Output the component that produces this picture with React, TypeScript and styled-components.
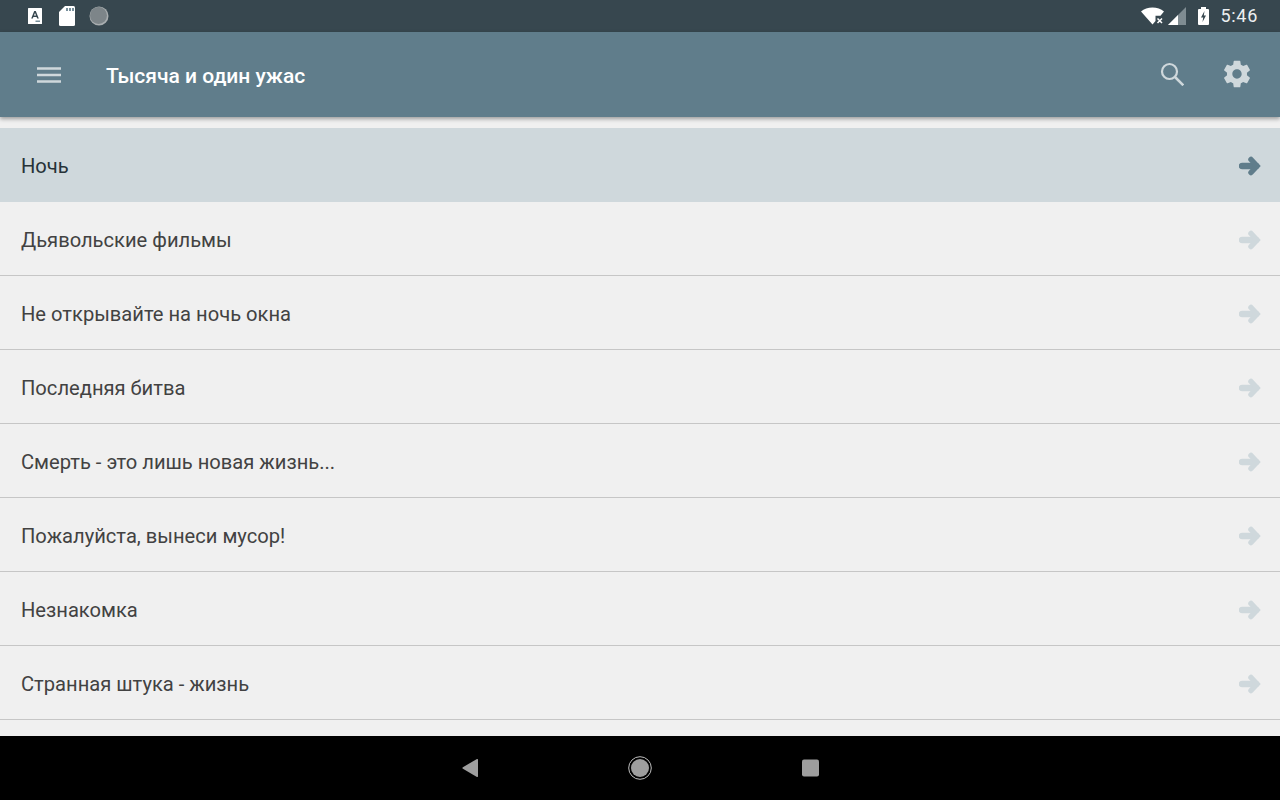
import React from "react";
import styled, { createGlobalStyle } from "styled-components";

const GlobalStyle = createGlobalStyle`
  html, body {
    margin: 0;
    padding: 0;
    width: 1280px;
    height: 800px;
    overflow: hidden;
    background: #f0f0f0;
    font-family: Roboto, "Noto Sans", sans-serif;
  }
`;

const Screen = styled.div`
  display: flex;
  flex-direction: column;
  width: 1280px;
  height: 800px;
  overflow: hidden;
`;

/* ------------------------------- status bar ------------------------------- */
const StatusBar = styled.div`
  display: flex;
  align-items: center;
  justify-content: space-between;
  height: 32px;
  flex: none;
  padding: 0 22px 0 28px;
  background: #37474f;
`;

const StatusGroup = styled.div`
  display: flex;
  align-items: center;
`;

const Clock = styled.span`
  margin-left: 11px;
  color: #eceff1;
  font-size: 18px;
  line-height: 32px;
  letter-spacing: 0.7px;
`;

const SdSvg = styled.svg`
  margin-left: 17px;
`;

const DiscSvg = styled.svg`
  margin-left: 14px;
`;

const SignalSvg = styled.svg`
  margin-left: 3px;
`;

const BatterySvg = styled.svg`
  margin-left: 12px;
`;

/* --------------------------------- app bar -------------------------------- */
const AppBar = styled.header`
  position: relative;
  z-index: 2;
  display: flex;
  align-items: center;
  height: 85px;
  flex: none;
  padding: 0 27px 0 37px;
  background: #607d8b;
  box-shadow: 0 2px 4px rgba(0, 0, 0, 0.35);
`;

const Title = styled.h1`
  flex: 1;
  margin: 0 0 0 45px;
  padding-top: 2px;
  color: #fff;
  font-size: 21px;
  font-weight: 500;
  line-height: 28px;
`;

const Actions = styled.div`
  display: flex;
  align-items: center;
  gap: 37px;
  padding-bottom: 2px;
`;

const BlockSvg = styled.svg`
  display: block;
`;

/* ---------------------------------- list ---------------------------------- */
const List = styled.main`
  flex: 1;
  min-height: 0;
  overflow: hidden;
  padding-top: 11px;
  background: #f0f0f0;
`;

const Row = styled.div<{ $active?: boolean }>`
  display: flex;
  align-items: center;
  justify-content: space-between;
  box-sizing: border-box;
  height: 74px;
  padding: 2px 17px 0 21px;
  background: ${(p) => (p.$active ? "#cfd8dc" : "transparent")};
  border-bottom: 1px solid ${(p) => (p.$active ? "#cfd8dc" : "#c6c6c6")};
  font-size: 20.15px;
`;

const RowText = styled.span<{ $active?: boolean }>`
  color: ${(p) => (p.$active ? "#263238" : "#424242")};
`;

/* ------------------------------- navigation ------------------------------- */
const NavBar = styled.nav`
  display: flex;
  align-items: center;
  justify-content: center;
  gap: 150px;
  height: 64px;
  flex: none;
  padding-left: 2px;
  background: #000;
`;

const ALauncher = () => (
  <svg width="14" height="16" viewBox="0 0 14 16">
    <rect width="14" height="16" rx="0.5" fill="#fff" />
    <path d="M3.2 10.5 6.2 3h1.6l3 7.5H9.2L8.6 9H5.4l-.6 1.5zM5.9 7.6h2.2L7 4.9z" fill="#37474f" />
    <rect x="7.5" y="12.5" width="4.5" height="1.5" fill="#78909c" />
  </svg>
);

const SdCard = () => (
  <SdSvg width="16" height="20" viewBox="0 0 16 20">
    <path d="M6 0h8.5A1.5 1.5 0 0 1 16 1.5v17a1.5 1.5 0 0 1-1.5 1.5h-13A1.5 1.5 0 0 1 0 18.5V6z" fill="#fff" />
    <path d="M7 2h2v3H7zM10 2h2v3h-2zM13 2h2v3h-2z" fill="#78909c" />
  </SdSvg>
);

const Disc = () => (
  <DiscSvg width="20" height="20" viewBox="0 0 20 20">
    <circle cx="10" cy="10" r="9.5" fill="#a9aeb0" />
    <circle cx="9.5" cy="9.5" r="8.5" fill="#7d8589" />
  </DiscSvg>
);

const Wifi = () => (
  <svg width="24" height="18" viewBox="0 0 24 18">
    <path d="M0 4.5C3 1.8 7 .5 11.5.5S20 1.8 23 4.5l-3.5 4.2h-5v5.2L11.5 17.5z" fill="#fff" />
    <path d="m16.5 11.5 4.5 4.5m0-4.5L16.5 16" stroke="#fff" strokeWidth="1.5" fill="none" />
  </svg>
);

const Signal = () => (
  <SignalSvg width="18" height="18" viewBox="0 0 18 18">
    <path d="M0 18 18 0v18z" fill="#7f8c92" />
    <path d="M0 18 10 8v10z" fill="#fff" />
  </SignalSvg>
);

const Battery = () => (
  <BatterySvg width="11" height="18" viewBox="0 0 11 18">
    <path d="M3 0h5v2h2a1 1 0 0 1 1 1v14a1 1 0 0 1-1 1H1a1 1 0 0 1-1-1V3a1 1 0 0 1 1-1h2z" fill="#fff" />
    <path d="M6.5 4 3 10.5h2.2L4.500 15 8 8.500H5.800z" fill="#37474f" />
  </BatterySvg>
);

const Menu = () => (
  <BlockSvg width="24" height="16" viewBox="0 0 24 16">
    <path d="M0 1.500h24M0 8h24M0 14.500h24" stroke="#cfd8dc" strokeWidth="2.600" fill="none" />
  </BlockSvg>
);

const Search = () => (
  <BlockSvg width="24" height="24" viewBox="0 0 24 24">
    <circle cx="9.500" cy="9.500" r="7.500" stroke="#cfd8dc" strokeWidth="2.200" fill="none" />
    <path d="m15 15 8.300 8.300" stroke="#cfd8dc" strokeWidth="2.500" fill="none" />
  </BlockSvg>
);

const Gear = () => (
  <BlockSvg width="32" height="32" viewBox="0 0 24 24">
    <path
      fill="#cfd8dc"
      d="M19.430 12.980c.04-.320.070-.640.070-.980s-.030-.660-.070-.980l2.110-1.650c.190-.150.240-.420.120-.640l-2-3.460c-.120-.220-.390-.300-.610-.220l-2.490 1c-.520-.400-1.080-.730-1.690-.980l-.380-2.650A.488.488 0 0 0 14 2h-4c-.250 0-.460.180-.490.420l-.380 2.650c-.610.250-1.170.590-1.690.980l-2.490-1c-.230-.090-.490 0-.610.220l-2 3.460c-.130.220-.070.490.120.640l2.110 1.650c-.040.320-.070.650-.070.980s.030.660.070.980l-2.110 1.650c-.190.150-.240.420-.120.640l2 3.460c.120.220.390.300.610.220l2.490-1c.520.400 1.080.730 1.690.980l.380 2.650c.030.240.240.420.490.420h4c.250 0 .460-.180.490-.420l.380-2.650c.610-.250 1.170-.590 1.690-.980l2.490 1c.230.090.490 0 .610-.220l2-3.460c.120-.220.070-.490-.120-.640l-2.110-1.650zM12 15.500c-1.930 0-3.500-1.570-3.500-3.500s1.570-3.500 3.500-3.500 3.500 1.570 3.500 3.500-1.570 3.500-3.500 3.500z"
    />
  </BlockSvg>
);

const Arrow = ({ active }: { active?: boolean }) => (
  <svg width="24" height="20" viewBox="0 0 24 20">
    <g stroke={active ? "#607d8b" : "#cfd8dc"} fill="none">
      <path d="M3 10h14" strokeWidth="6.500" strokeLinecap="round" />
      <path d="M12 3.500 18 10 12 16.500" strokeWidth="5.500" strokeLinecap="round" strokeLinejoin="miter" />
    </g>
  </svg>
);

const NavBack = () => (
  <BlockSvg width="16" height="18" viewBox="0 0 16 18">
    <path d="M16 1v16a1 1 0 0 1-1.500.800L.500 9.500v-1L14.500.200A1 1 0 0 1 16 1z" fill="#9e9e9e" />
  </BlockSvg>
);

const NavHome = () => (
  <BlockSvg width="24" height="24" viewBox="0 0 24 24">
    <circle cx="12" cy="12" r="11.300" stroke="#bdbdbd" strokeWidth="1" fill="none" />
    <circle cx="12" cy="12" r="9" fill="#9e9e9e" />
  </BlockSvg>
);

const NavRecent = () => (
  <BlockSvg width="18" height="18" viewBox="0 0 18 18">
    <rect x="0" y="0.500" width="17" height="17" rx="2" fill="#9e9e9e" />
  </BlockSvg>
);

const items = [
  "Ночь",
  "Дьявольские фильмы",
  "Не открывайте на ночь окна",
  "Последняя битва",
  "Смерть - это лишь новая жизнь...",
  "Пожалуйста, вынеси мусор!",
  "Незнакомка",
  "Странная штука - жизнь",
];

export default function App() {
  return (
    <Screen>
      <GlobalStyle />
      <StatusBar>
        <StatusGroup>
          <ALauncher />
          <SdCard />
          <Disc />
        </StatusGroup>
        <StatusGroup>
          <Wifi />
          <Signal />
          <Battery />
          <Clock>5:46</Clock>
        </StatusGroup>
      </StatusBar>
      <AppBar>
        <Menu />
        <Title>Тысяча и один ужас</Title>
        <Actions>
          <Search />
          <Gear />
        </Actions>
      </AppBar>
      <List>
        {items.map((item, i) => (
          <Row key={item} $active={i === 0}>
            <RowText $active={i === 0}>{item}</RowText>
            <Arrow active={i === 0} />
          </Row>
        ))}
      </List>
      <NavBar>
        <NavBack />
        <NavHome />
        <NavRecent />
      </NavBar>
    </Screen>
  );
}
